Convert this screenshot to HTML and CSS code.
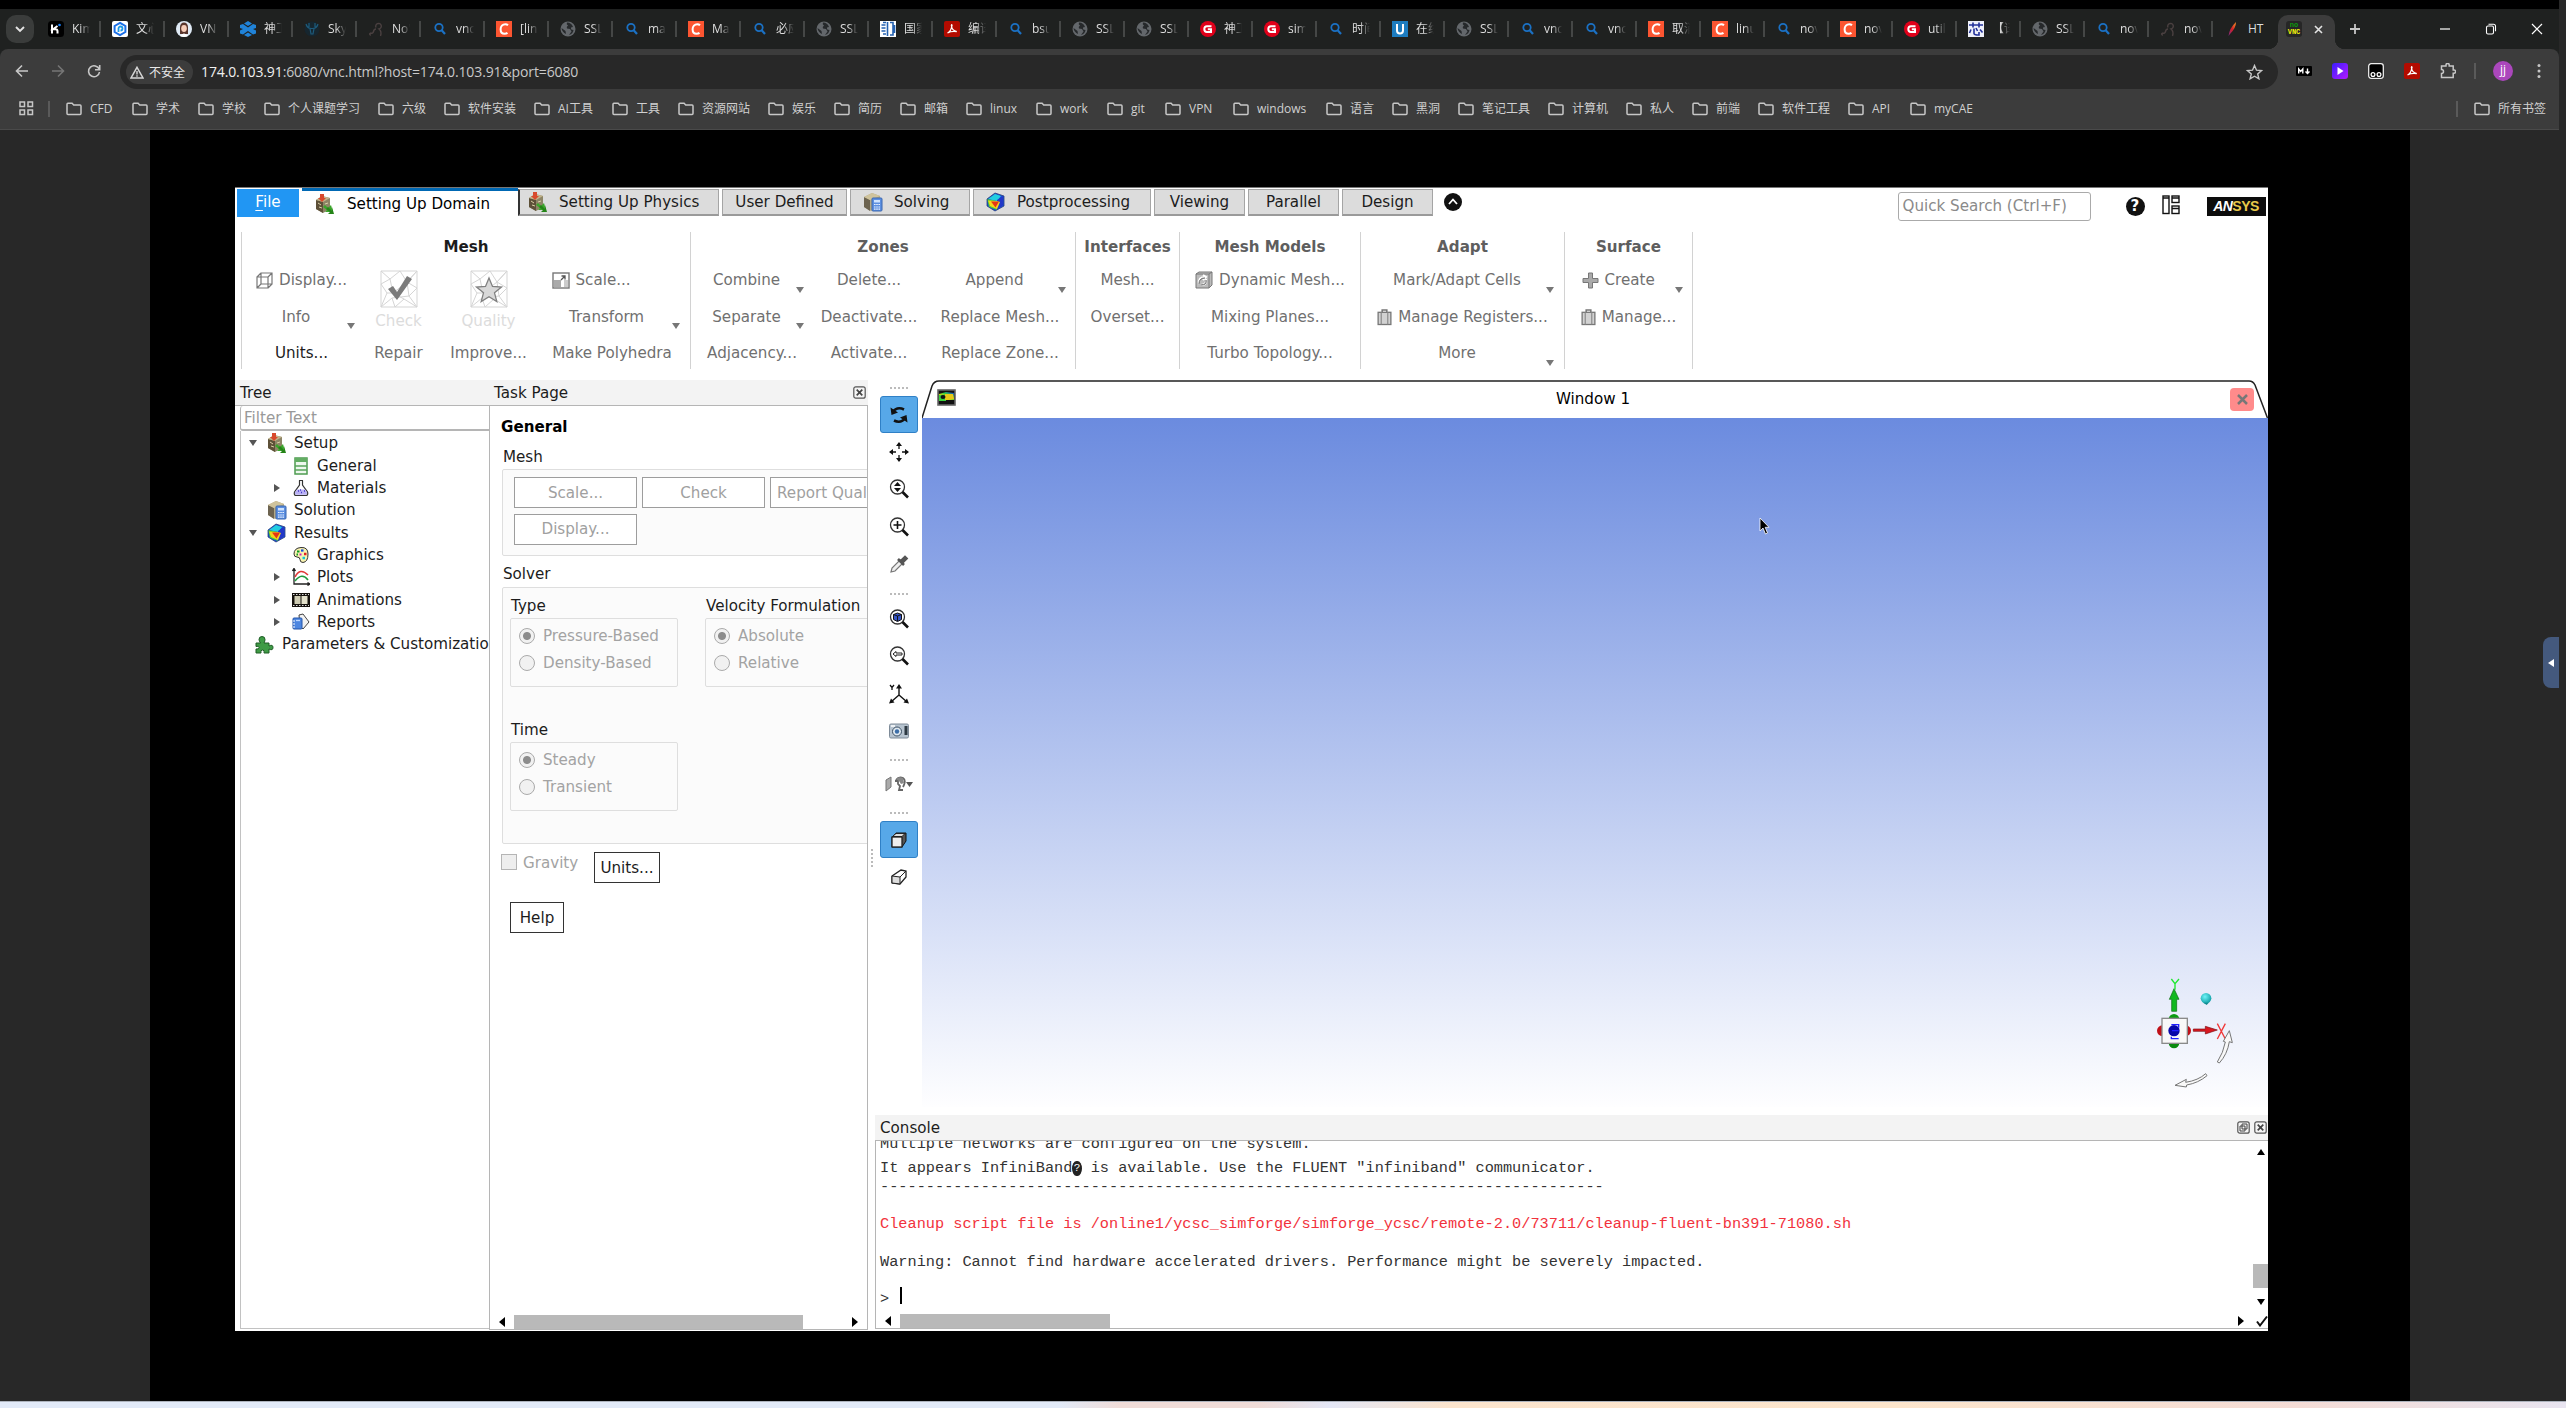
FILE: index.html
```html
<!DOCTYPE html>
<html lang="zh-CN">
<head>
<meta charset="utf-8">
<title>noVNC</title>
<link rel="stylesheet" href="styles.css">
</head>
<body>
<svg class="defs" width="0" height="0">
  <defs>
    <linearGradient id="gplay" x1="0" y1="0" x2="1" y2="1"><stop offset="0" stop-color="#3a1cff"/><stop offset="1" stop-color="#b31cff"/></linearGradient>
    <linearGradient id="gfeather" x1="0" y1="1" x2="1" y2="0"><stop offset="0" stop-color="#7a2a8a"/><stop offset=".5" stop-color="#d22128"/><stop offset="1" stop-color="#f69923"/></linearGradient>
    <radialGradient id="gcyan" cx=".4" cy=".35" r=".7"><stop offset="0" stop-color="#6ff4f8"/><stop offset="1" stop-color="#0a9aa0"/></radialGradient>
    <linearGradient id="grain" x1="0" y1="1" x2="1" y2="0"><stop offset="0" stop-color="#e03010"/><stop offset=".3" stop-color="#f5d800"/><stop offset=".6" stop-color="#30d040"/><stop offset="1" stop-color="#1030f0"/></linearGradient>
  </defs>
  <symbol id="f-kimi" viewBox="0 0 16 16"><rect width="16" height="16" rx="3.5" fill="#000"/><path d="M4 3.5v9M9.5 5 5 8.3h2.500q2 0 2 2v2.200" stroke="#fff" stroke-width="2" fill="none"/><circle cx="11.500" cy="4" r="1.300" fill="#1783ff"/></symbol>
  <symbol id="f-wen" viewBox="0 0 16 16"><rect width="16" height="16" rx="2" fill="#fff"/><path d="M8 1.800 13.400 5v6L8 14.200 2.600 11V5z" fill="none" stroke="#1a6fe8" stroke-width="2"/><path d="M6.500 11V7.500a2 2 0 1 1 2 2" fill="none" stroke="#1a9be8" stroke-width="1.800"/></symbol>
  <symbol id="f-girl" viewBox="0 0 16 16"><circle cx="8" cy="8" r="8" fill="#dfeaf5"/><path d="M4 13V6a4 4.500 0 0 1 8 0v7z" fill="#59352c"/><ellipse cx="8" cy="7.500" rx="2.800" ry="3.400" fill="#f6cdb9"/><path d="M4 15q4-5 8 0-4 2-8 0z" fill="#fff"/></symbol>
  <symbol id="f-hex" viewBox="0 0 16 16"><path d="M8 0l4 2.500-4 2.500-4-2.500zM0 4l3-1 5 3.500L13 3l3 1v3l-3 1 3 1.500v3L13 13.500 8 10l-5 3.500-3-1v-3L3 8 0 7zM8 11.500l4 2.500-4 2-4-2z" fill="#2083d8"/></symbol>
  <symbol id="f-deer" viewBox="0 0 16 16"><circle cx="8" cy="8" r="7.500" fill="#16262f"/><path d="M2 3q1 4 5 4.500M14 3q-1 4-5 4.500M5 2v4M11 2v4M6 7.500h4L9 13H7z" fill="none" stroke="#1d5b7c" stroke-width="1.200"/></symbol>
  <symbol id="f-dark" viewBox="0 0 16 16"><path d="M8 6.500a2.800 2.800 0 1 1 3 1.500q3 2.500 1.500 7M8 8q-2 0-2.500 2.500T2 12M2 12q-1 2 1 2" fill="none" stroke="#4a4040" stroke-width="1.400"/></symbol>
  <symbol id="f-find" viewBox="0 0 16 16"><circle cx="7" cy="6.500" r="3.700" fill="none" stroke="#1b71c4" stroke-width="1.800"/><path d="M9.700 9.300 13 13" stroke="#1b71c4" stroke-width="2.200"/></symbol>
  <symbol id="f-c" viewBox="0 0 16 16"><rect width="16" height="16" fill="#fc5531"/><path d="M12 4.300A4 4 0 0 0 9.300 3.200C6.500 3.200 4.600 5.500 4.600 8.300s1.500 4.500 4 4.500q1.700 0 2.900-.9" fill="none" stroke="#fff" stroke-width="2"/></symbol>
  <symbol id="f-globe" viewBox="0 0 16 16"><circle cx="8" cy="8" r="7.500" fill="#63676b"/><path d="M7 1.500q-1 2 1 3-2 1.500-1 3l3 .5 1.500 2.500L9 14q4-1 4.500-5-3 0-2.500-2.500l2-.5Q11.500 1.500 7 1.500zM1.500 7l4 3 .5 3Q2 11 1.500 7z" fill="#26292b"/></symbol>
  <symbol id="f-g" viewBox="0 0 16 16"><circle cx="8" cy="8" r="8" fill="#e0001a"/><path d="M11.500 5.200H7A2.600 2.800 0 0 0 7 11h4V8.300H7.800" fill="none" stroke="#fff" stroke-width="2"/></symbol>
  <symbol id="f-u" viewBox="0 0 16 16"><rect width="16" height="16" fill="#1c7cc0"/><path d="M5 3v6.500a3 3 0 0 0 6 0V3" fill="none" stroke="#fff" stroke-width="2"/></symbol>
  <symbol id="f-pdf" viewBox="0 0 16 16"><rect width="16" height="16" rx="2" fill="#b30b00"/><path d="M3.500 12q3.500-1.500 4.500-7.500Q7.700 3 7.400 4.500q.5 5 5.400 6.200-5-.9-9.300 1.300z" fill="none" stroke="#fff" stroke-width="1.300"/></symbol>
  <symbol id="f-guo" viewBox="0 0 16 16"><rect width="16" height="16" fill="#fff"/><path d="M3 1.500h3M1.500 4h4M1.500 7h4M1.500 10h4M3 13h3M7.500 1v14M10 1.500h3V14h-3M14.500 4v8" stroke="#2461b0" stroke-width="1.600" fill="none"/></symbol>
  <symbol id="f-xin" viewBox="0 0 16 16"><rect width="16" height="16" fill="#eef0fa"/><path d="M1 4h14M5 1.500v5M11 1.500v5M3 8.500 1.500 12M6 7.500v5q0 1.500 5 1.500V11M8 7l1.500 3M12 8.500l2.500 3" stroke="#22309a" stroke-width="1.600" fill="none"/></symbol>
  <symbol id="f-feather" viewBox="0 0 16 16"><path d="M4.500 15q1-8 7.500-14 0 6-6 12z" fill="url(#gfeather)"/></symbol>
  <symbol id="f-md" viewBox="0 0 16 16"><rect y="3" width="16" height="10" rx="1" fill="#000"/><path d="M2.700 10.500V6l2 2.500L6.800 6v4.500M11.500 5.500V10M9.500 8.500l2 2 2-2" stroke="#fff" stroke-width="1.400" fill="none"/></symbol>
  <symbol id="f-play" viewBox="0 0 16 16"><rect width="16" height="16" rx="3" fill="url(#gplay)"/><path d="M5.500 4v8l6-4z" fill="#fff"/></symbol>
  <symbol id="f-tm" viewBox="0 0 16 16"><rect x=".7" y=".7" width="14.600" height="14.600" rx="2.500" fill="#000" stroke="#eee" stroke-width="1.300"/><circle cx="5" cy="11.500" r="1.900" fill="none" stroke="#fff" stroke-width="1.300"/><circle cx="11" cy="11.500" r="1.900" fill="none" stroke="#fff" stroke-width="1.300"/></symbol>
  <symbol id="folder" viewBox="0 0 16 16"><path d="M1 3.200q0-.9.900-.9h4.200l1.600 1.700h6.400q.9 0 .9.900v7.600q0 .9-.9.900H1.900q-.9 0-.9-.9z" fill="none" stroke="#c7c7c7" stroke-width="1.500"/></symbol>
  <symbol id="setup" viewBox="0 0 20 20"><path d="M1 6 7 2l8 2v11l-7 4-7-4z" fill="#8d8566"/><path d="M1 6l7 2v11l-7-4z" fill="#5d5038"/><path d="M1 6l6-4 8 2-7 4z" fill="#c3b48a"/><path d="M3 9l3 2M4 13l3 1M10 10l3-1" stroke="#d9cfa6"/><path d="M5 0h4v4h2L7 8 3 4h2z" fill="#d8492c"/><path d="M10 11l3 3 3-3 2 7h-8l2-2-4-3z" fill="#3ba52b"/><path d="M13 13l4 4v-4l2 7h-6l2-2-4-3z" fill="#258418"/></symbol>
  <symbol id="solve" viewBox="0 0 20 20"><path d="M1 5l8-4 8 3v11l-9 4-7-4z" fill="#b5a984"/><path d="M1 5l6 3v11l-6-4z" fill="#6c6350"/><path d="M1 5l8-4 8 3-10 4z" fill="#cfc39c"/><rect x="9" y="6" width="10" height="13" rx="1" fill="#5c8fe0" stroke="#3a66b0"/><rect x="11" y="8" width="6" height="2.500" fill="#cfe3ff"/><path d="M11 12.500h6M11 15h6M11 17.200h6" stroke="#e8f1ff" stroke-width="1.200" stroke-dasharray="1.600 .6"/></symbol>
  <symbol id="result" viewBox="0 0 20 20"><path d="M1 7 9 1l9 3v10l-9 5-8-5z" fill="#1b49d8"/><path d="M2 7l7-5 6 2-4 5z" fill="#22cde0"/><path d="M11 8l6-4v9l-6 5z" fill="#2338c8"/><path d="M1 7l10 2v9l-8-3z" fill="#45cf35"/><path d="M2 8.500l9 .5 3 1-3 7-7-3z" fill="#f5d21a"/><path d="M5 9.500h8l-3.500 6z" fill="#e33416"/><path d="M1 7 9 1l9 3v10l-9 5-8-5z" fill="none" stroke="#28407a" stroke-width=".8"/></symbol>
  <symbol id="sheet" viewBox="0 0 18 18"><rect x="3" y="1" width="12" height="16" fill="#eef8ee" stroke="#4e9c50" stroke-width="1.500"/><rect x="3" y="1" width="12" height="4" fill="#63ad63"/><path d="M3 9h12M3 13h12" stroke="#5aa45c" stroke-width="1.300"/></symbol>
  <symbol id="flask" viewBox="0 0 18 18"><path d="M7 1.500h4M7.500 1.500V6L2.500 13q-1 3.500 2 3.500h9q3 0 2-3.500l-5-7V1.500" fill="#fff" stroke="#333" stroke-width="1.200"/><path d="M5 10.500h8l2 3q.5 2.300-1.500 2.300h-9q-2 0-1.500-2.300z" fill="#b8b0f4"/><path d="M6 12h1M9 13.500h1M12 12h1M8 11h1" stroke="#4637c8" stroke-width="1.300"/></symbol>
  <symbol id="palette" viewBox="0 0 18 18"><path d="M2 8q0-6 7-6.500T16 8q0 8-5 8.500-3 0-3-3 0-2.500-3-2.500T2 8z" fill="#f8f2b0" stroke="#333"/><path d="M5 5.500h2.500M4.500 8.500H6" stroke="#0a9a20" stroke-width="2"/><path d="M9 4.500h2.500" stroke="#1746e0" stroke-width="2.200"/><path d="M12 8h2.500" stroke="#e02020" stroke-width="2.500"/><path d="M10.500 12h2.500" stroke="#14c6d8" stroke-width="2.500"/><path d="M7.500 8.500h2" stroke="#c020c0" stroke-width="2"/></symbol>
  <symbol id="plot" viewBox="0 0 18 18"><path d="M2 0v16h16M.5 3 2 .5 3.500 3M15.500 14.500 18 16l-2.500 1.500" fill="none" stroke="#222" stroke-width="1.300"/><path d="M3 9q5-10 13-2" fill="none" stroke="#e03838" stroke-width="1.600"/><path d="M3 13q7-9 13-1" fill="none" stroke="#1e9a3c" stroke-width="1.600"/></symbol>
  <symbol id="film" viewBox="0 0 18 18"><rect y="2" width="18" height="14" fill="#15120e"/><rect x="2.500" y="5" width="6" height="8" fill="#cfcdb4"/><rect x="9.500" y="5" width="6" height="8" fill="#e4e2cc"/><path d="M1 3.500h16M1 14.500h16" stroke="#ddd" stroke-width="1.200" stroke-dasharray="1.500 1.500"/></symbol>
  <symbol id="report" viewBox="0 0 18 18"><path d="M7 2l4-1 6 8-6 7-3-3z" fill="#f2f2f2" stroke="#444"/><rect x="1" y="5" width="9" height="11" rx="1" fill="#4d86e0" stroke="#2455a8"/><path d="M1 8h2M1 11h2M1 14h2" stroke="#fff"/><path d="M4 7.500h4" stroke="#bcd6ff" stroke-width="1.300"/></symbol>
  <symbol id="puzzle" viewBox="0 0 20 20"><path d="M1 9h4.500q-1.500-2-1.500-3.500Q4 2.500 7 2.500t3 3Q10 7 9 9h5v3q4-2 4 1.500T14 15v4H9q1-3-1.500-3T6 19H1v-4q3 .5 3-1.500T1 12.500z" fill="#3f9b45" stroke="#1e5c25"/></symbol>
  <symbol id="mag" viewBox="0 0 20 20"><circle cx="8.500" cy="8" r="7" fill="#fff" stroke="#333" stroke-width="1.300"/><path d="M13.500 13 19 18.500" stroke="#111" stroke-width="2.600"/></symbol>
  <symbol id="mesh" viewBox="0 0 38 38"><path d="M1 1h36v36H1zM1 1l9 8L20 1l7 11L37 1 27 12l10 6-8 8 8 11-13-8-9 8-3-9L1 37l6-14L1 14l9-5 3 14 14-11 2 14-17 2M7 23l6 0M13 23l11 6" fill="none" stroke="#d5d5d5" stroke-width="1"/></symbol>
  <symbol id="bag" viewBox="0 0 16 18"><path d="M5.500 4V1.500h5V4" fill="none" stroke="#777" stroke-width="1.600"/><rect x="1.200" y="4" width="13.600" height="13" fill="#d2d2d2" stroke="#777" stroke-width="1.400"/><path d="M4.500 4v13M11.500 4v13" stroke="#888" stroke-width="1.200"/></symbol>
  <symbol id="boxx" viewBox="0 0 13 13"><rect x=".8" y=".8" width="11.400" height="11.400" rx="2" fill="#f4f4f4" stroke="#555" stroke-width="1.200"/><path d="M3.700 3.700l5.600 5.600M9.300 3.700 3.700 9.300" stroke="#444" stroke-width="1.700"/></symbol>
</svg>

<div class="browser">
  <div class="tabstrip">
    <div class="tabsearch"><svg width="10" height="8" viewBox="0 0 10 8"><path d="M1 2l4 4 4-4" fill="none" stroke="#e3e3e3" stroke-width="1.900"/></svg></div>
    <div class="tabs">
      <div class="tab"><svg><use href="#f-kimi"/></svg><span>Kimi</span></div>
      <div class="tab"><svg><use href="#f-wen"/></svg><span>文心</span></div>
      <div class="tab"><svg><use href="#f-girl"/></svg><span>VN</span></div>
      <div class="tab"><svg><use href="#f-hex"/></svg><span>神工</span></div>
      <div class="tab"><svg><use href="#f-deer"/></svg><span>Sky</span></div>
      <div class="tab"><svg><use href="#f-dark"/></svg><span>No'</span></div>
      <div class="tab"><svg><use href="#f-find"/></svg><span>vnc</span></div>
      <div class="tab"><svg><use href="#f-c"/></svg><span>[lin</span></div>
      <div class="tab"><svg><use href="#f-globe"/></svg><span>SSL</span></div>
      <div class="tab"><svg><use href="#f-find"/></svg><span>ma</span></div>
      <div class="tab"><svg><use href="#f-c"/></svg><span>Ma</span></div>
      <div class="tab"><svg><use href="#f-find"/></svg><span>必应</span></div>
      <div class="tab"><svg><use href="#f-globe"/></svg><span>SSL</span></div>
      <div class="tab"><svg><use href="#f-guo"/></svg><span>国家</span></div>
      <div class="tab"><svg><use href="#f-pdf"/></svg><span>编译</span></div>
      <div class="tab"><svg><use href="#f-find"/></svg><span>bsu</span></div>
      <div class="tab"><svg><use href="#f-globe"/></svg><span>SSL</span></div>
      <div class="tab"><svg><use href="#f-globe"/></svg><span>SSL</span></div>
      <div class="tab"><svg><use href="#f-g"/></svg><span>神工</span></div>
      <div class="tab"><svg><use href="#f-g"/></svg><span>sim</span></div>
      <div class="tab"><svg><use href="#f-find"/></svg><span>时间</span></div>
      <div class="tab"><svg><use href="#f-u"/></svg><span>在线</span></div>
      <div class="tab"><svg><use href="#f-globe"/></svg><span>SSL</span></div>
      <div class="tab"><svg><use href="#f-find"/></svg><span>vnc</span></div>
      <div class="tab"><svg><use href="#f-find"/></svg><span>vnc</span></div>
      <div class="tab"><svg><use href="#f-c"/></svg><span>取消</span></div>
      <div class="tab"><svg><use href="#f-c"/></svg><span>linu</span></div>
      <div class="tab"><svg><use href="#f-find"/></svg><span>nov</span></div>
      <div class="tab"><svg><use href="#f-c"/></svg><span>nov</span></div>
      <div class="tab"><svg><use href="#f-g"/></svg><span>utili</span></div>
      <div class="tab"><svg><use href="#f-xin"/></svg><span>【译</span></div>
      <div class="tab"><svg><use href="#f-globe"/></svg><span>SSL</span></div>
      <div class="tab"><svg><use href="#f-find"/></svg><span>nov</span></div>
      <div class="tab"><svg><use href="#f-dark"/></svg><span>nov</span></div>
      <div class="tab last"><svg><use href="#f-feather"/></svg><span>HT</span></div>
    </div>
    <div class="tab-active">
      <div class="novnc"><b>no</b><i>VNC</i></div>
      <svg width="9" height="9" viewBox="0 0 9 9"><path d="M1 1l7 7M8 1 1 8" stroke="#e3e3e3" stroke-width="1.600"/></svg>
    </div>
    <svg class="plus" width="12" height="12" viewBox="0 0 12 12"><path d="M6 1v10M1 6h10" stroke="#c7c7c7" stroke-width="1.800"/></svg>
    <div class="winctl">
      <svg width="12" height="12" viewBox="0 0 12 12"><path d="M1 6h10" stroke="#fff" stroke-width="1.200"/></svg>
      <svg width="12" height="12" viewBox="0 0 12 12"><rect x="1.500" y="3" width="7" height="8" rx="1.500" fill="none" stroke="#fff" stroke-width="1.100"/><path d="M3.500 1.200h5q2 0 2 2v5" fill="none" stroke="#fff" stroke-width="1.100"/></svg>
      <svg width="12" height="12" viewBox="0 0 12 12"><path d="M1 1l10 10M11 1 1 11" stroke="#fff" stroke-width="1.200"/></svg>
    </div>
  </div>

  <div class="toolbar">
    <div class="nav">
      <svg width="16" height="16" viewBox="0 0 16 16"><path d="M14 8H3M8 2.500 2.500 8 8 13.500" fill="none" stroke="#c7c7c7" stroke-width="1.600"/></svg>
      <svg width="16" height="16" viewBox="0 0 16 16"><path d="M2 8h11M8 2.500 13.500 8 8 13.500" fill="none" stroke="#757575" stroke-width="1.600"/></svg>
      <svg width="16" height="16" viewBox="0 0 16 16"><path d="M13.200 6.300A5.500 5.500 0 1 0 13.500 9M13.700 2v4.700H9" fill="none" stroke="#c7c7c7" stroke-width="1.600"/></svg>
    </div>
    <div class="omni">
      <div class="chip"><svg width="14" height="13" viewBox="0 0 14 13"><path d="M7 1.300 13 12H1z" fill="none" stroke="#d5d5d5" stroke-width="1.500"/><path d="M7 5v3.500M7 9.300v1.500" stroke="#d5d5d5" stroke-width="1.400"/></svg><span>不安全</span></div>
      <div class="url"><span>174.0.103.91</span>:6080/vnc.html?host=174.0.103.91&amp;port=6080</div>
      <svg class="star" width="17" height="16" viewBox="0 0 17 16"><path d="M8.500 1.500l2 4.700 5 .4-3.800 3.300 1.200 4.900-4.400-2.600-4.400 2.600 1.200-4.900L1.500 6.600l5-.4z" fill="none" stroke="#c7c7c7" stroke-width="1.400"/></svg>
    </div>
    <div class="exts">
      <svg><use href="#f-md"/></svg><svg><use href="#f-play"/></svg><svg><use href="#f-tm"/></svg><svg><use href="#f-pdf"/></svg>
      <svg viewBox="0 0 16 16"><path d="M1.500 3H6V2a1.600 1.600 0 0 1 3.200 0v1h4v4h.8a1.600 1.600 0 0 1 0 3.200h-.8v4.300H1.500v-4a2 2 0 0 0 0-4z" fill="none" stroke="#c7c7c7" stroke-width="1.500"/></svg>
    </div>
    <i class="vsep"></i>
    <div class="avatar">jj</div>
    <svg class="kebab" width="4" height="16" viewBox="0 0 4 16"><g fill="#c7c7c7"><circle cx="2" cy="2.500" r="1.500"/><circle cx="2" cy="8" r="1.500"/><circle cx="2" cy="13.500" r="1.500"/></g></svg>
  </div>

  <div class="bookmarks">
    <svg class="apps" width="15" height="15" viewBox="0 0 15 15"><g fill="none" stroke="#c7c7c7" stroke-width="1.500"><rect x="1" y="1" width="4.500" height="4.500"/><rect x="9" y="1" width="4.500" height="4.500"/><rect x="1" y="9" width="4.500" height="4.500"/><rect x="9" y="9" width="4.500" height="4.500"/></g></svg>
    <i class="vsep"></i>
    <div class="marks">
      <a style="width:66px"><svg><use href="#folder"/></svg>CFD</a>
      <a style="width:66px"><svg><use href="#folder"/></svg>学术</a>
      <a style="width:66px"><svg><use href="#folder"/></svg>学校</a>
      <a style="width:114px"><svg><use href="#folder"/></svg>个人课题学习</a>
      <a style="width:66px"><svg><use href="#folder"/></svg>六级</a>
      <a style="width:90px"><svg><use href="#folder"/></svg>软件安装</a>
      <a style="width:78px"><svg><use href="#folder"/></svg>AI工具</a>
      <a style="width:66px"><svg><use href="#folder"/></svg>工具</a>
      <a style="width:90px"><svg><use href="#folder"/></svg>资源网站</a>
      <a style="width:66px"><svg><use href="#folder"/></svg>娱乐</a>
      <a style="width:66px"><svg><use href="#folder"/></svg>简历</a>
      <a style="width:66px"><svg><use href="#folder"/></svg>邮箱</a>
      <a style="width:70px"><svg><use href="#folder"/></svg>linux</a>
      <a style="width:71px"><svg><use href="#folder"/></svg>work</a>
      <a style="width:58px"><svg><use href="#folder"/></svg>git</a>
      <a style="width:68px"><svg><use href="#folder"/></svg>VPN</a>
      <a style="width:93px"><svg><use href="#folder"/></svg>windows</a>
      <a style="width:66px"><svg><use href="#folder"/></svg>语言</a>
      <a style="width:66px"><svg><use href="#folder"/></svg>黑洞</a>
      <a style="width:90px"><svg><use href="#folder"/></svg>笔记工具</a>
      <a style="width:78px"><svg><use href="#folder"/></svg>计算机</a>
      <a style="width:66px"><svg><use href="#folder"/></svg>私人</a>
      <a style="width:66px"><svg><use href="#folder"/></svg>前端</a>
      <a style="width:90px"><svg><use href="#folder"/></svg>软件工程</a>
      <a style="width:62px"><svg><use href="#folder"/></svg>API</a>
      <a style="width:82px"><svg><use href="#folder"/></svg>myCAE</a>
    </div>
    <i class="vsep end"></i>
    <div class="marks"><a><svg><use href="#folder"/></svg>所有书签</a></div>
  </div>
</div>

<div class="page">
  <div class="stage">
    <div class="fluent">
      <div class="menubar">
        <div class="file"><u>F</u>ile</div>
        <div class="mtab on" style="width:216px"><svg class="i20"><use href="#setup"/></svg><span>Setting Up Domain</span></div>
        <div class="mtab" style="width:201px"><svg class="i20"><use href="#setup"/></svg><span>Setting Up Physics</span></div>
        <div class="mtab plain" style="width:125px">User Defined</div>
        <div class="mtab" style="width:120px"><svg class="i20"><use href="#solve"/></svg><span>Solving</span></div>
        <div class="mtab" style="width:178px"><svg class="i20"><use href="#result"/></svg><span>Postprocessing</span></div>
        <div class="mtab plain" style="width:91px">Viewing</div>
        <div class="mtab plain" style="width:91px">Parallel</div>
        <div class="mtab plain" style="width:91px">Design</div>
        <svg class="up" width="18" height="18" viewBox="0 0 18 18"><circle cx="9" cy="9" r="9" fill="#111"/><path d="M5 11l4-4.500 4 4.500" fill="none" stroke="#fff" stroke-width="1.800"/></svg>
        <div class="search">Quick Search (Ctrl+F)</div>
        <div class="help">?</div>
        <svg class="lay" width="18" height="20" viewBox="0 0 18 20"><g fill="#fff" stroke="#111" stroke-width="1.400"><rect x="1" y="1" width="6" height="17.500"/><rect x="10" y="1" width="7" height="6.500"/><rect x="10" y="11" width="7" height="7.500"/></g><path d="M1 3h6M10 3h7M10 13.500h7" stroke="#111" stroke-width="1.300"/></svg>
        <div class="ansys"><b>AN</b>SYS</div>
      </div>

      <div class="ribbon">
        <section style="width:449px">
          <h3 class="dark">Mesh</h3>
          <div class="cols">
            <div style="width:116px"><p><svg width="17" height="17" viewBox="0 0 17 17"><path d="M1 5h11v11H1zM5 1h11v11H5zM1 5l4-4M12 5l4-4M12 16l4-4M1 16l4-4" fill="none" stroke="#777" stroke-width="1.200"/></svg>Display...</p><p class="dd">Info</p><p class="dark">Units...</p></div>
            <div style="width:78px"><div class="big"><svg width="38" height="38" viewBox="0 0 38 38"><use href="#mesh"/><path d="M8 19l5-3 4 6L27 6l5 3-15 21z" fill="#7b7b7b"/></svg>Check</div><p>Repair</p></div>
            <div style="width:102px"><div class="big"><svg width="38" height="38" viewBox="0 0 38 38"><use href="#mesh"/><path d="M19 8l3.500 8.500 9 .6-7 5.700 2.300 8.700L19 26.700l-7.800 4.800 2.300-8.700-7-5.700 9-.6z" fill="#d8d8d8" stroke="#808080" stroke-width="1.300"/></svg>Quality</div><p>Improve...</p></div>
            <div style="width:145px"><p class="left"><svg width="18" height="17" viewBox="0 0 18 17"><rect x="1" y="1" width="16" height="15" fill="#fff" stroke="#777" stroke-width="1.400"/><rect x="2" y="8" width="7" height="7" fill="#aaa"/><rect x="12" y="8" width="4" height="7" fill="#ccc"/><path d="M9 8l4-4M9.500 4H13v3.500" fill="none" stroke="#555" stroke-width="1.300"/></svg>Scale...</p><p class="dd">Transform</p><p>Make Polyhedra</p></div>
          </div>
        </section>
        <section style="width:385px">
          <h3>Zones</h3>
          <div class="cols">
            <div style="width:114px"><p class="dd">Combine</p><p class="dd">Separate</p><p>Adjacency...</p></div>
            <div style="width:120px"><p>Delete...</p><p>Deactivate...</p><p>Activate...</p></div>
            <div style="width:142px"><p class="dd">Append</p><p>Replace Mesh...</p><p>Replace Zone...</p></div>
          </div>
        </section>
        <section style="width:104px">
          <h3>Interfaces</h3>
          <div class="cols"><div style="width:96px"><p>Mesh...</p><p>Overset...</p></div></div>
        </section>
        <section style="width:181px">
          <h3>Mesh Models</h3>
          <div class="cols"><div style="width:172px"><p><svg width="18" height="18" viewBox="0 0 18 18"><path d="M1 3h13v14H1zM1 3l3-2h13v13l-3 3M14 3l3-2" fill="#bbb" stroke="#777"/><path d="M4 13q-1-7 6-7M8 4l3 2-3 3M11 8q1 6-5 6" fill="none" stroke="#fff" stroke-width="2"/><path d="M4 13q0-6 6-6M11 9q1 5-5 5" fill="none" stroke="#555"/></svg>Dynamic Mesh...</p><p>Mixing Planes...</p><p>Turbo Topology...</p></div></div>
        </section>
        <section style="width:204px">
          <h3>Adapt</h3>
          <div class="cols"><div style="width:193px"><p class="dd">Mark/Adapt Cells</p><p><svg width="15" height="18"><use href="#bag"/></svg>Manage Registers...</p><p class="dd">More</p></div></div>
        </section>
        <section style="width:128px">
          <h3>Surface</h3>
          <div class="cols"><div style="width:118px"><p class="dd left"><svg width="17" height="17" viewBox="0 0 17 17"><path d="M6.500 1h4v5.500H16v4h-5.500V16h-4v-5.500H1v-4h5.500z" fill="#aaa" stroke="#777"/></svg>Create</p><p><svg width="15" height="18"><use href="#bag"/></svg>Manage...</p></div></div>
        </section>
        <section class="endline"></section>
      </div>

      <div class="work">
        <div class="docks">
          <div class="dockhead"><span class="t1">Tree</span><span class="t2">Task Page</span><svg width="13" height="13"><use href="#boxx"/></svg></div>
          <div class="dockbody">
            <div class="treedock">
              <div class="filter">Filter Text</div>
              <div class="tree">
                <div class="n0"><i class="open"></i><svg><use href="#setup"/></svg>Setup</div>
                <div class="n1"><i></i><svg><use href="#sheet"/></svg>General</div>
                <div class="n1"><i class="shut"></i><svg><use href="#flask"/></svg>Materials</div>
                <div class="n0"><i></i><svg><use href="#solve"/></svg>Solution</div>
                <div class="n0"><i class="open"></i><svg><use href="#result"/></svg>Results</div>
                <div class="n1"><i></i><svg><use href="#palette"/></svg>Graphics</div>
                <div class="n1"><i class="shut"></i><svg><use href="#plot"/></svg>Plots</div>
                <div class="n1"><i class="shut"></i><svg><use href="#film"/></svg>Animations</div>
                <div class="n1"><i class="shut"></i><svg><use href="#report"/></svg>Reports</div>
                <div class="n0"><i></i><svg><use href="#puzzle"/></svg>Parameters &amp; Customization</div>
              </div>
            </div>
            <div class="task">
              <div class="form">
                <h2>General</h2>
                <h4 class="l1">Mesh</h4>
                <div class="box btns"><button>Scale...</button><button>Check</button><button>Report Quality</button><button>Display...</button></div>
                <h4 class="l2">Solver</h4>
                <div class="box solver">
                  <div class="scol">
                    <h4>Type</h4>
                    <div class="box radios"><label class="sel"><i></i>Pressure-Based</label><label><i></i>Density-Based</label></div>
                    <h4 class="time">Time</h4>
                    <div class="box radios"><label class="sel"><i></i>Steady</label><label><i></i>Transient</label></div>
                  </div>
                  <div class="scol">
                    <h4>Velocity Formulation</h4>
                    <div class="box radios"><label class="sel"><i></i>Absolute</label><label><i></i>Relative</label></div>
                  </div>
                </div>
                <div class="grav"><i></i><span>Gravity</span><button class="live">Units...</button></div>
                <button class="live helpb">Help</button>
              </div>
              <div class="hscroll"><i class="al"></i><b></b><i class="ar"></i></div>
            </div>
          </div>
        </div>

        <div class="right">
          <div class="viewrow">
            <div class="tools">
              <i class="dots"></i>
              <div class="tb on"><svg width="20" height="20" viewBox="0 0 20 20"><path d="M3 7.500Q8 1 15 4.500M17 12.500Q12 19 5 15.500" fill="none" stroke="#111" stroke-width="2.600"/><path d="M1.500 2.500 2.500 10 9 7.500zM18.500 17.500 17.500 10 11 12.500z" fill="#111"/></svg></div>
              <div class="tb"><svg width="20" height="20" viewBox="0 0 20 20"><path d="M10 1v6M10 13v6M1 10h6M13 10h6" stroke="#111" stroke-width="1.300"/><path d="M10 0l3 4H7zM10 20l3-4H7zM0 10l4-3v6zM20 10l-4-3v6z" fill="#111"/></svg></div>
              <div class="tb"><svg width="20" height="20" viewBox="0 0 20 20"><use href="#mag"/><path d="M8.500 3l3.500 4H5zM8.500 13 12 9H5z" fill="#111"/></svg></div>
              <div class="tb"><svg width="20" height="20" viewBox="0 0 20 20"><use href="#mag"/><path d="M8.500 4v8M4.500 8h8" stroke="#111" stroke-width="1.600"/></svg></div>
              <div class="tb"><svg width="20" height="20" viewBox="0 0 20 20"><path d="M2 18l1-4 8-8 3 3-8 8z" fill="#eee" stroke="#777" stroke-width="1.200"/><path d="M9 5l6 6M12 7l4-4 1.500 1.500-4 4z" stroke="#555" stroke-width="2.600"/></svg></div>
              <i class="dots d2"></i>
              <div class="tb"><svg width="20" height="20" viewBox="0 0 20 20"><use href="#mag"/><path d="M4.500 5.500 8.500 4l4 1.500v5l-4 2-4-2z" fill="#3454c8" stroke="#111"/><path d="M4.500 5.500l4 1.500 4-1.500M8.500 7v5" stroke="#111" fill="none"/></svg></div>
              <div class="tb"><svg width="20" height="20" viewBox="0 0 20 20"><use href="#mag"/><path d="M4 8l3-2.500v1.500h6v2H7v1.500z" fill="#fff" stroke="#222"/></svg></div>
              <div class="tb"><svg width="20" height="20" viewBox="0 0 20 20"><path d="M10 3v8l-8 7M10 11l8 7" fill="none" stroke="#111" stroke-width="1.400"/><path d="M10 0l3 4.500H7zM0 19.500l2-5 3.500 4zM20 19.500l-2-5-3.500 4z" fill="#111"/><path d="M1 1l2 2.500L5 1M3 3.500V6" fill="none" stroke="#111" stroke-width="1.300"/></svg></div>
              <div class="tb"><svg width="20" height="16" viewBox="0 0 20 16"><rect x=".5" y="1" width="19" height="14" rx="1.500" fill="#b6c3cf" stroke="#7e8b98"/><rect x="15.500" y="3" width="3" height="9" fill="#2d3942"/><circle cx="8" cy="8.500" r="4.500" fill="#dfe8ef" stroke="#3c5064"/><circle cx="8" cy="8.500" r="2.200" fill="#3c6ea8"/><path d="M2 3h4" stroke="#fff" stroke-width="1.500"/></svg></div>
              <i class="dots d3"></i>
              <div class="tb"><svg width="28" height="16" viewBox="0 0 28 16"><path d="M1 4l5-3v10l-5 4z" fill="#aaa" stroke="#777"/><path d="M11 4q3-4 7-2 3 2 1 7l-1 2M10 5h3v3l2 2-1 4h4" fill="none" stroke="#666" stroke-width="1.800"/><path d="M11 3q3-3 7-1l1 5-3 1-2-3z" fill="#888"/><path d="M21 6h7l-3.500 5z" fill="#555"/></svg></div>
              <i class="dots d4"></i>
              <div class="tb on"><svg width="16" height="16" viewBox="0 0 16 16"><path d="M1 5 5 1h10v8l-4 6H1z" fill="#555" stroke="#111"/><rect x="1" y="5" width="10" height="10" fill="#eee" stroke="#222" stroke-width="1.300"/><path d="M1.500 4.500 5 1.500h9l-3 3z" fill="#ddd" stroke="#222"/></svg></div>
              <div class="tb"><svg width="16" height="16" viewBox="0 0 16 16"><path d="M1 7l9-6 5 1v6l-6 7-8-1z" fill="#fff" stroke="#222" stroke-width="1.300"/><path d="M1 7l8 1v7l-8-1z" fill="#ddd" stroke="#222"/><path d="M9 8l6-6" stroke="#222"/></svg></div>
              <i class="vdots"></i>
            </div>
            <div class="view">
              <div class="vtab">
                <svg class="outline" width="1346" height="38" viewBox="0 0 1346 38"><path d="M0 38 10 6Q12 1 17 1H1327Q1331 1 1333 5L1345.500 38" fill="#fff" stroke="#222" stroke-width="1.500"/></svg>
                <svg class="vi" width="19" height="17" viewBox="0 0 19 17"><rect x="1" y="1" width="17" height="15" fill="#111" stroke="#666" stroke-width="1.600"/><path d="M2 5l7-2 8 1v7H2z" fill="url(#grain)"/><path d="M2 6h7v6H2z" fill="#3cd13c"/><path d="M8 5h8l1 5-9 1z" fill="#e8c818"/><ellipse cx="6" cy="8" rx="2.500" ry="2" fill="#111"/><path d="M2 13h15v2H2z" fill="#111"/></svg>
                <span>Window 1</span>
                <div class="vx"><svg width="11" height="11" viewBox="0 0 11 11"><path d="M1 1l9 9M10 1 1 10" stroke="#777" stroke-width="2.500"/></svg></div>
              </div>
              <div class="canvas">
                <svg class="cursor" width="11" height="18" viewBox="0 0 11 18"><path d="M1 1v13l3-3 2.500 6 2-1L6.200 10.300H10z" fill="#000" stroke="#fff" stroke-width=".8"/></svg>
                <svg class="triad" width="80" height="114" viewBox="165 80 240 342">
                  <circle cx="222" cy="210" r="16" fill="#0a9a10"/><circle cx="222" cy="281" r="16" fill="#0a8a10"/><circle cx="187" cy="244" r="16" fill="#c01018"/><circle cx="257" cy="244" r="16" fill="#c01018"/>
                  <path d="M215 186V150h-7l14-32 15 32h-7v36z" fill="#12b820" stroke="#0a6a10" stroke-width="2"/>
                  <path d="M280 239h36v-8l36 11-36 12v-8h-36z" fill="#d81820" stroke="#7c0a10" stroke-width="2"/>
                  <path d="M214 89l11 14 12-14M225 103v18" fill="none" stroke="#1ce82c" stroke-width="4"/>
                  <path d="M352 223l24 46M376 223l-24 46" stroke="#f03838" stroke-width="4"/>
                  <rect x="186" y="207" width="76" height="75" fill="#f8f8f8" stroke="#8a8a8a" stroke-width="4"/>
                  <circle cx="222" cy="244" r="17" fill="#0808a8"/><path d="M214 226h22v9M214 268h22M214 262v8M216 244h20" fill="none" stroke="#2020ff" stroke-width="4"/>
                  <circle cx="318" cy="147" r="16" fill="url(#gcyan)"/><path d="M310 160l10 7 6-7z" fill="#128a90"/>
                  <path d="M388 244l9 36-9-3q-6 38-30 64l-6-3q18-28 24-60l-6-2z" fill="#f8f8f8" stroke="#777" stroke-width="3"/>
                  <path d="M225 408l34-18-2 9q38-6 60-26l4 6q-26 22-61 28l-1 6z" fill="#f8f8f8" stroke="#777" stroke-width="3"/>
                </svg>
              </div>
            </div>
          </div>
          <div class="grip"><i class="dots"></i></div>
          <div class="conhead"><span>Console</span><svg width="13" height="13" viewBox="0 0 13 13"><rect x=".8" y=".8" width="11.400" height="11.400" rx="2" fill="#f4f4f4" stroke="#555" stroke-width="1.200"/><path d="M5 3h5v5H5zM3 5h5v5H3z" fill="none" stroke="#444"/></svg><svg width="13" height="13"><use href="#boxx"/></svg></div>
          <div class="conbody">
            <div class="conrow">
              <div class="log"><div class="first">Multiple networks are configured on the system.</div><div>It appears InfiniBand<em>?</em> is available. Use the FLUENT "infiniband" communicator.</div><div>-------------------------------------------------------------------------------</div><div></div><div class="red">Cleanup script file is /online1/ycsc_simforge/simforge_ycsc/remote-2.0/73711/cleanup-fluent-bn391-71080.sh</div><div></div><div>Warning: Cannot find hardware accelerated drivers. Performance might be severely impacted.</div><div></div><div class="prompt">&gt;<i></i></div></div>
              <div class="vscroll"><i class="au"></i><b></b><i class="ad"></i></div>
            </div>
            <div class="hscroll c"><i class="al"></i><b></b><i class="ar"></i><svg width="12" height="12" viewBox="0 0 12 12"><path d="M1 6.500 4 10.500 11 1.500" fill="none" stroke="#111" stroke-width="2"/></svg></div>
          </div>
        </div>
      </div>
    </div>
  </div>
  <div class="handle"><i></i></div>
</div>
<div class="taskbar"></div>
</body>
</html>
```

FILE: styles.css
```css
* { box-sizing: border-box; }
body { margin: 0; width: 2566px; height: 1408px; overflow: hidden; background: #282828; font-family: "DejaVu Sans", sans-serif; }
h2, h3, h4, p { margin: 0; }
.defs { position: absolute; }
svg { flex: none; display: block; }

/* browser chrome */
.browser { width: 2559px; height: 130px; background: #1f2120; border-top: 9px solid #000; font-family: "Open Sans", "Noto Sans CJK SC", sans-serif; color: #dedede; }
.tabstrip { height: 40px; display: flex; padding-left: 6px; }
.tabsearch { width: 28px; height: 28px; margin-top: 6px; border-radius: 10px; background: #3a3c3b; display: flex; align-items: center; justify-content: center; }
.tabs { display: flex; margin-left: 14px; width: 2230px; }
.tab { width: 64px; height: 40px; flex: none; display: flex; align-items: center; position: relative; font-size: 12px; }
.tab svg { width: 16px; height: 16px; }
.tab span { width: 18px; margin-left: 8px; overflow: hidden; white-space: nowrap; line-height: 20px; -webkit-mask-image: linear-gradient(90deg, #000 45%, transparent); mask-image: linear-gradient(90deg, #000 45%, transparent); }
.tab::after { content: ""; width: 2px; height: 16px; background: #454746; margin-left: 9px; }
.tab.last::after { display: none; }
.tab.last span { -webkit-mask-image: none; mask-image: none; }
.tab-active { width: 57px; height: 34px; margin-top: 6px; border-radius: 10px 10px 0 0; background: #3c3c3c; display: flex; align-items: center; padding: 0 0 6px 8px; gap: 12px; position: relative; }
.tab-active::before, .tab-active::after { content: ""; position: absolute; bottom: 0; width: 10px; height: 10px; }
.tab-active::before { left: -10px; background: radial-gradient(circle at 0 0, transparent 10px, #3c3c3c 10.500px); }
.tab-active::after { right: -10px; background: radial-gradient(circle at 100% 0, transparent 10px, #3c3c3c 10.500px); }
.novnc { width: 16px; height: 16px; border-radius: 3px; background: #262626; font: bold 7px/7px "Liberation Mono", monospace; display: flex; flex-direction: column; align-items: center; padding-top: 1px; }
.novnc b { color: #0c9a0c; }
.novnc i { color: #f2f20a; font-style: normal; }
.plus { margin: 14px 0 0 14px; }
.winctl { display: flex; gap: 34px; margin: 14px 0 0 78px; }

.toolbar { height: 44px; background: #3c3c3c; border-radius: 8px 8px 0 0; display: flex; align-items: center; padding-left: 14px; position: relative; }
.nav { display: flex; gap: 20px; width: 106px; }
.omni { width: 2158px; height: 34px; border-radius: 17px; background: #282828; display: flex; align-items: center; padding-left: 6px; margin-top: 2px; }
.chip { width: 67px; height: 24px; border-radius: 12px; background: #3c3c3c; display: flex; align-items: center; gap: 5px; padding-left: 4px; font-size: 12px; color: #e8e8e8; white-space: nowrap; }
.url { flex: 1; margin-left: 8px; font-size: 14px; letter-spacing: -.12px; color: #c9c9c9; line-height: 20px; }
.url span { color: #f0f0f0; }
.star { margin-right: 15px; }
.exts { display: flex; gap: 20px; margin-left: 18px; }
.exts svg { width: 16px; height: 16px; }
.vsep { width: 2px; height: 16px; background: #5a5a5a; flex: none; }
.toolbar .vsep { margin-left: 18px; }
.avatar { width: 20px; height: 20px; border-radius: 50%; background: #ab47bc; margin-left: 17px; font-size: 12px; line-height: 18px; text-align: center; color: #fff; }
.kebab { margin-left: 24px; }

.bookmarks { height: 37px; background: #3c3c3c; border-bottom: 1px solid #4a4a4a; display: flex; align-items: center; padding: 0 0 5px 19px; font-size: 12px; color: #d0d0d0; }
.bookmarks > .vsep { margin-left: 14px; }
.marks { display: flex; margin-left: 16px; }
.marks a { display: flex; align-items: center; gap: 8px; flex: none; white-space: nowrap; line-height: 18px; }
.marks svg { width: 16px; height: 16px; }
.bookmarks > .vsep.end { margin-left: 464px; }

/* remote screen */
.page { height: 1271px; display: flex; padding-left: 150px; position: relative; }
.stage { width: 2260px; height: 1271px; background: #000; padding: 57px 0 0 85px; }
.handle { position: absolute; right: 7px; top: 507px; width: 16px; height: 51px; border-radius: 8px 0 0 8px; background: #44597d; display: flex; align-items: center; justify-content: center; }
.handle i { border: 4px solid transparent; border-right: 6px solid #fff; border-left: 0; }
.taskbar { height: 7px; background: linear-gradient(90deg, #e2eaf8 0, #e2eaf8 1060px, #f0dcd8 1120px, #f0dcd8 1260px, #e4e7f6 1330px, #fbe4cd 1450px, #fce5cc 1900px, #f4dcd6 2300px, #e8e4f0 2566px); border-top: 1px solid #aeb4be; }

.fluent { width: 2033px; height: 1144px; background: #fff; border-top: 1px solid #777; font-size: 15.130px; color: #1c1c1c; white-space: nowrap; overflow: hidden; }
.menubar { height: 32px; display: flex; padding-left: 2px; }
.file { width: 62px; height: 28px; margin-top: 1px; background: #2196f3; color: #fff; text-align: center; line-height: 27px; }
.file u { text-underline-offset: 3px; }
.mtab { height: 27px; margin: 1px 1.500px 0; background: #dcdcdc; border: 1px solid #a5a5a5; border-bottom: 2px solid #9a9a9a; display: flex; align-items: center; flex: none; padding-left: 8px; gap: 11px; line-height: 24px; }
.mtab.plain { justify-content: center; padding: 0; }
.mtab:nth-child(n+5) { padding-left: 12px; }
.mtab.plain:nth-child(n) { padding-left: 0; }
.mtab.on { background: #fff; border: 0; border-top: 3px solid #0068b4; padding-left: 13px; gap: 12px; margin: 0 0 0 3px; height: 28px; color: #000; }
.mtab.on + .mtab { margin-left: 0; border-left: 2px solid #333; }
.i20 { width: 20px; height: 20px; }
.up { margin: 5px 0 0 9px; }
.search { width: 193px; height: 29px; border: 1px solid #aaa; border-radius: 3px; margin: 4px 0 0 436px; padding-left: 4px; line-height: 27px; color: #8a8a8a; }
.help { width: 19px; height: 19px; border-radius: 50%; background: #111; color: #fff; font-weight: bold; text-align: center; line-height: 19px; margin: 9px 0 0 35px; }
.lay { margin: 7px 0 0 17px; }
.ansys { width: 59px; height: 19px; background: #0c0c0c; margin: 9px 0 0 27px; color: #e8c84a; font: bold 14px/19px "Liberation Sans", sans-serif; text-align: center; letter-spacing: -.5px; }
.ansys b { color: #fff; font-style: italic; }

.ribbon { display: flex; height: 137px; margin: 12px 0 0 6px; color: #707070; }
.ribbon section { border-left: 1px solid #d2d2d2; }
.ribbon section.endline { width: 1px; }
.ribbon h3 { height: 30px; line-height: 30px; font-size: 15.130px; text-align: center; color: #5e5e5e; }
.ribbon .dark { color: #1c1c1c; }
.cols { display: flex; justify-content: center; }
.ribbon section:first-child .cols { padding-right: 4px; }
.ribbon p { height: 36.500px; display: flex; align-items: center; justify-content: center; gap: 6px; position: relative; line-height: 20px; }
.ribbon p.left { justify-content: flex-start; padding-left: 12px; }
.ribbon p.dd { padding-right: 11px; }
.ribbon p.dd::after { content: ""; position: absolute; right: 5px; bottom: 6px; border: 4.500px solid transparent; border-top: 6px solid #777; border-bottom: 0; }
.big { height: 73px; padding-top: 8px; display: flex; flex-direction: column; align-items: center; color: #dcdcdc; line-height: 26px; }

.work { display: flex; height: 951px; margin-top: 11px; }
.docks { width: 633px; }
.dockhead { height: 25px; background: #f3f3f3; display: flex; align-items: center; padding-left: 5px; }
.t1 { width: 254px; }
.t2 { width: 359px; }
.dockbody { display: flex; height: 925px; border-top: 1px solid #b5b5b5; }
.treedock { width: 254px; padding-left: 5px; }
.filter { height: 25px; border: 1px solid #b5b5b5; border-width: 0 0 2px 1px; border-radius: 3px 0 0 3px; line-height: 24px; padding-left: 3px; color: #999; }
.tree { height: 898px; border: 1px solid #c2c2c2; border-width: 0 0 1px 1px; padding-top: 1px; overflow: hidden; }
.tree > div { height: 22.350px; line-height: 22px; display: flex; align-items: center; }
.tree i { width: 12px; display: flex; }
.tree .n0 { padding-left: 6px; }
.tree .n0 svg { width: 20px; height: 20px; margin: 0 7px 0 8px; }
.tree .n1 { padding-left: 31px; }
.tree .n1 svg { width: 18px; height: 18px; margin: 0 7px 0 8px; }
.tree .open::before { content: ""; border: 4.500px solid transparent; border-top: 6px solid #555; border-bottom: 0; margin-left: 2px; }
.tree .shut::before { content: ""; border: 4.500px solid transparent; border-left: 6px solid #555; border-right: 0; margin-left: 2px; }
.task { width: 379px; border: 1px solid #b5b5b5; border-top: 0; display: flex; flex-direction: column; overflow: hidden; }
.form { flex: 1; padding: 10px 0 0 11px; }
.form h2 { font-size: 15.130px; line-height: 22px; color: #000; }
.form h4 { font-weight: normal; font-size: 15.130px; line-height: 22px; padding-left: 2px; }
.form .l1 { margin-top: 8px; }
.form .l2 { margin-top: 7px; }
.box { background: #fbfbfb; border: 1px solid #dedede; border-radius: 2px; margin: 1px 0 0 1px; }
.btns { width: 480px; height: 87px; padding: 7px 0 0 11px; display: grid; grid-template-columns: 123px 123px 123px; gap: 5.500px 5px; align-content: start; }
button { font: inherit; height: 31px; background: #fff; border: 1.500px solid #9d9d9d; color: #a0a0a0; padding: 0; text-align: center; }
button.live { border-color: #333; color: #1c1c1c; }
.solver { width: 480px; height: 257px; margin-top: 2px; padding: 7px 0 0 6px; display: flex; gap: 26px; }
.scol { width: 169px; flex: none; }
.scol + .scol { width: 240px; }
.solver .box { height: 69px; padding: 3px 0 0 8px; }
.solver .time { margin-top: 32px; }
.radios label { height: 27px; display: flex; align-items: center; gap: 8px; color: #a3a3a3; }
.radios i { width: 16px; height: 16px; border-radius: 50%; border: 1px solid #aaa; background: #f1f1f1; }
.radios .sel i { background: radial-gradient(circle, #8c8c8c 3.500px, #f1f1f1 4.500px); }
.grav { display: flex; margin-top: 8px; color: #a3a3a3; line-height: 22px; }
.grav i { width: 16px; height: 16px; border: 1px solid #b5b5b5; background: #eee; margin-top: 2px; }
.grav span { width: 77px; margin-left: 6px; }
.grav button { width: 66px; margin-left: -6px; }
.helpb { width: 54px; margin: 19px 0 0 9px; display: block; }

.hscroll { height: 14px; display: flex; align-items: center; }
.hscroll b { background: #b9b9b9; height: 14px; width: 289px; margin-left: 9px; }
.hscroll .al { border: 5px solid transparent; border-right: 6px solid #000; border-left: 0; margin-left: 9px; }
.hscroll .ar { border: 5px solid transparent; border-left: 6px solid #000; border-right: 0; margin-left: 49px; }

.right { width: 1400px; display: flex; flex-direction: column; }
.viewrow { display: flex; height: 727px; }
.tools { width: 54px; display: flex; flex-direction: column; align-items: center; padding: 6px 0 0 7px; position: relative; }
.dots { width: 20px; height: 5px; background: radial-gradient(circle, #bbb .9px, transparent 1.100px) 0 0 / 4px 4px; flex: none; }
.tb { width: 38px; height: 37.300px; flex: none; display: flex; align-items: center; justify-content: center; }
.tools .dots + .tb { margin-top: 5px; }
.tb.on { background: #57a8e8; border: 1.500px solid #2f80c6; border-radius: 3px; }
.tools .d2 { margin-top: 10px; }
.tools .d3 { margin-top: 8px; }
.tools .d4 { margin-top: 8px; }
.tools .d2 + .tb { margin-top: 3px; }
.tools .d3 + .tb { margin-top: 3px; }
.vdots { position: absolute; left: 2px; top: 468px; width: 4px; height: 20px; background: radial-gradient(circle, #bbb .9px, transparent 1.100px) 0 0 / 4px 4px; }
.view { width: 1346px; }
.vtab { height: 38px; display: flex; align-items: center; position: relative; }
.outline { position: absolute; left: 0; top: 0; }
.vi { position: relative; margin: -3px 0 0 15px; }
.vtab span { position: relative; flex: 1; text-align: center; color: #000; padding-left: 0; }
.vx { position: relative; width: 24px; height: 23px; border-radius: 4px; background: #ff8b8b; display: flex; align-items: center; justify-content: center; margin-right: 14px; }
.canvas { height: 689px; position: relative; background: linear-gradient(#6b8bdf, #fefeff); }
.cursor { position: absolute; left: 837px; top: 99px; }
.triad { position: absolute; left: 1233px; top: 558px; }
.grip { height: 8px; padding: 2px 0 0 695px; }
.conhead { height: 25px; background: #f3f3f3; margin-left: 7px; display: flex; align-items: center; gap: 4px; padding: 0 1px 0 5px; }
.conhead span { flex: 1; }
.conbody { height: 189px; margin-left: 7px; border: 1px solid #b5b5b5; border-right: 0; display: flex; flex-direction: column; }
.conrow { flex: 1; display: flex; min-height: 0; }
.log { flex: 1; overflow: hidden; font-family: "Liberation Mono", monospace; font-size: 15.280px; color: #333; padding-left: 4px; }
.log div { height: 18.800px; line-height: 18.800px; white-space: pre; }
.log .first { margin: -6px 0 5px; }
.log .red { color: #f2323c; }
.log em { display: inline-block; width: 9.170px; height: 15px; line-height: 15px; font-style: normal; font-size: 11px; text-align: center; color: #fff; background: #222; border-radius: 50%; vertical-align: 1px; }
.log .prompt { display: flex; }
.prompt i { width: 1.500px; height: 17px; background: #000; margin: -3px 0 0 11px; }
.vscroll { width: 15px; display: flex; flex-direction: column; align-items: center; padding-top: 8px; }
.vscroll b { width: 15px; height: 24px; background: #b9b9b9; margin-top: 109px; }
.au { border: 4px solid transparent; border-bottom: 6px solid #000; border-top: 0; }
.ad { border: 4px solid transparent; border-top: 6px solid #000; border-bottom: 0; margin-top: 11px; }
.hscroll.c b { width: 210px; }
.hscroll.c .ar { margin-left: 1128px; }
.hscroll.c svg { margin-left: 12px; }
```
